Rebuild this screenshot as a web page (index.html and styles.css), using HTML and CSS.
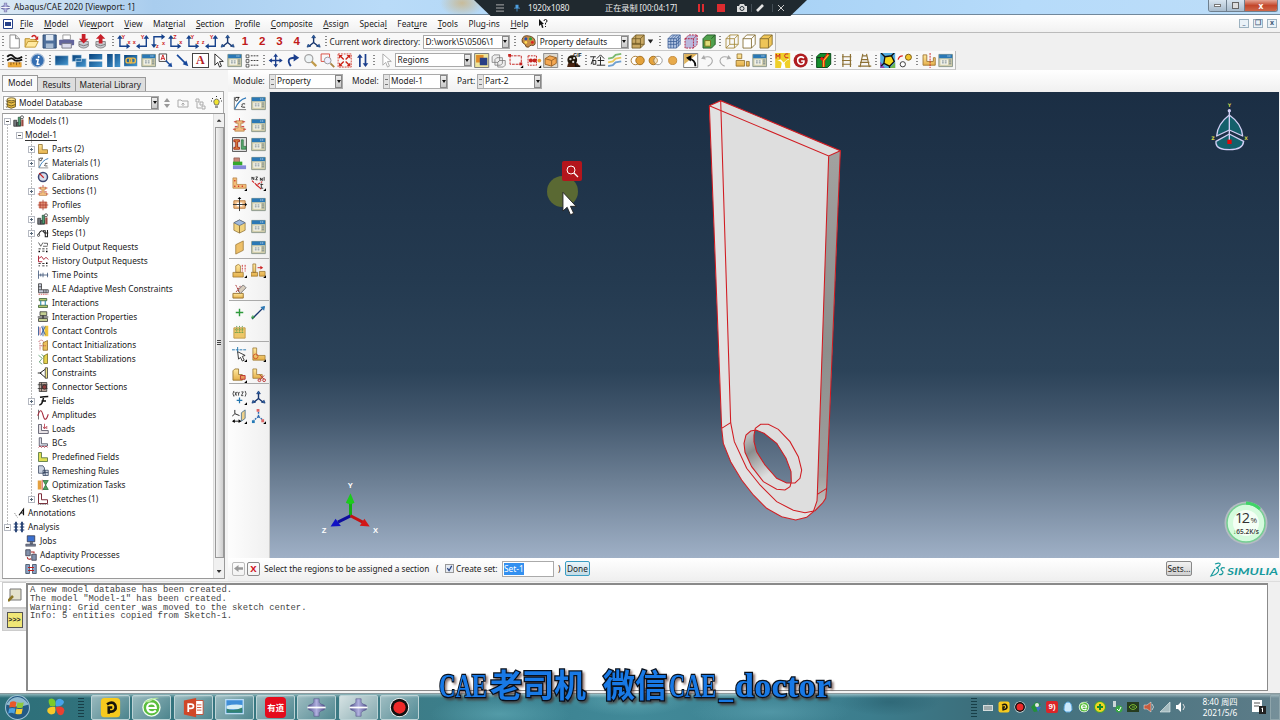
FILE: index.html
```html
<!DOCTYPE html>
<html lang="en">
<head>
<meta charset="UTF-8">
<title>Abaqus/CAE 2020 [Viewport: 1]</title>
<link rel="stylesheet" href="styles.css">
</head>
<body>

<!-- Icon set -->
<svg class="defs">
<defs>
<linearGradient id="gBlue" x1="0" y1="0" x2="1" y2="1"><stop offset="0" stop-color="#08427c"/><stop offset="1" stop-color="#4698d0"/></linearGradient>
<linearGradient id="gGold" x1="0" y1="0" x2="0" y2="1"><stop offset="0" stop-color="#ffe9a0"/><stop offset="1" stop-color="#e5b04a"/></linearGradient>
<linearGradient id="gHub" x1="0" x2="1"><stop offset="0" stop-color="#50508c"/><stop offset=".5" stop-color="#b0b0de"/><stop offset="1" stop-color="#50508c"/></linearGradient>
<symbol id="new" viewBox="0 0 16 16"><path d="M3 1h6l4 4v10H3z" fill="#fff" stroke="#888"/><path d="M9 1v4h4" fill="#ddd" stroke="#888"/></symbol>
<symbol id="open" viewBox="0 0 16 16"><path d="M1 14V5h5l1 1h6v3" fill="#f4d27a" stroke="#b98d28"/><path d="M1 14l3-6h11l-3 6z" fill="#ffe9a0" stroke="#c29a35"/><path d="M8 3q4-3 5 1" fill="none" stroke="#c22" stroke-width="1.6"/><path d="M15 2v4h-4z" fill="#c22"/></symbol>
<symbol id="save" viewBox="0 0 16 16"><path d="M1 1h14v14H1z" fill="#4e6f9b" stroke="#29486f"/><path d="M4 1h8v6H4z" fill="#dfe8f2"/><path d="M4 10h8v5H4z" fill="#a9bdd4"/></symbol>
<symbol id="print" viewBox="0 0 16 16"><path d="M4 1h8v5H4z" fill="#fff" stroke="#999"/><rect y="6" width="16" height="6" rx="1" fill="#62649c"/><path d="M3 10h10v5H3z" fill="#dde" stroke="#778"/></symbol>
<symbol id="dbin" viewBox="0 0 16 16"><path d="M3 8v5q5 4 10 0V8z" fill="#c9ccd2" stroke="#888"/><path d="M3 11q5 3 10 0" fill="none" stroke="#777"/><path d="M6 0h4v5h3L8 10 3 5h3z" fill="#c8202a"/></symbol>
<symbol id="dbout" viewBox="0 0 16 16"><path d="M3 8v5q5 4 10 0V8z" fill="#c9ccd2" stroke="#888"/><path d="M3 11q5 3 10 0" fill="none" stroke="#777"/><path d="M6 10h4V5h3L8 0 3 5h3z" fill="#c8202a"/></symbol>
<symbol id="axL" viewBox="0 0 16 16"><path d="M3 3v10h9" fill="none" stroke="#16428c" stroke-width="1.5"/><path d="M0 5l3-4 3 4zM10 10l4 3-4 3z" fill="#16428c"/></symbol>
<symbol id="axR" viewBox="0 0 16 16"><path d="M13 3v10H4" fill="none" stroke="#16428c" stroke-width="1.5"/><path d="M10 5l3-4 3 4zM6 10l-4 3 4 3z" fill="#16428c"/></symbol>
<symbol id="axT" viewBox="0 0 16 16"><path d="M3 13V3h10" fill="none" stroke="#16428c" stroke-width="1.5"/><path d="M0 11l3 4 3-4zM11 0l4 3-4 3z" fill="#16428c"/></symbol>
<symbol id="triad" viewBox="0 0 16 16"><path d="M8 9V2M8 9l-5 4M8 9l5 4" stroke="#17356e" stroke-width="1.5"/><path d="M6 4l2-3 2 3zM1 14l1-3 3 2zM15 14l-1-3-3 2z" fill="#2d68ae" stroke="#17356e" stroke-width=".7"/></symbol>
<symbol id="palette" viewBox="0 0 16 16"><path d="M1 6q1-5 7-4 7 1 7 7 0 4-4 3-2 0-3 2-3 1-4-3-4-2-3-5z" fill="#c68c47" stroke="#654422"/><circle cx="5" cy="5" r="1.6" fill="#2850b0"/><circle cx="10" cy="5" r="1.6" fill="#2ba03a"/><circle cx="12" cy="9" r="1.5" fill="#d22"/><circle cx="5" cy="9" r="1.5" fill="#fd5"/></symbol>
<symbol id="cube" viewBox="0 0 16 16"><path d="M2 5l4-4h9v10l-4 4H2z" fill="currentColor"/><path d="M2 5l4-4h9v10l-4 4H2zM2 5h9v10M11 5l4-4" fill="none" stroke="#80682c" stroke-width=".9"/></symbol>
<symbol id="cubeopen" viewBox="0 0 16 16"><path d="M2 5l4-4h9v10l-4 4H2z" fill="#c9a965"/><path d="M2 5l4-4h9v10l-4 4H2zM2 5h9v10M11 5l4-4M6 1v10H2M6 11h9M2 10h9" fill="none" stroke="#715a25" stroke-width=".9"/></symbol>
<symbol id="cubegrid" viewBox="0 0 16 16"><path d="M2 5l4-4h9v10l-4 4H2z" fill="#b5c7e4"/><path d="M2 5l4-4h9v10l-4 4H2zM2 5h9v10M11 5l4-4M5 5v10M8 5v10M2 8h9M2 11h9M11 8l4-4M11 11l4-4M5 5l4-4M8 5l4-4M13 3v10" fill="none" stroke="#365993" stroke-width=".8"/></symbol>
<symbol id="cubered" viewBox="0 0 16 16"><path d="M2 5l4-4h9v10l-4 4H2z" fill="#b9b8dc"/><path d="M2 5l4-4h9v10l-4 4H2zM2 5h9v10M11 5l4-4" fill="none" stroke="#b51e3d" stroke-dasharray="2 1"/></symbol>
<symbol id="cubegreen" viewBox="0 0 16 16"><path d="M2 5l4-4h9v10l-4 4H2z" fill="#4fa04c" stroke="#265a2a"/><path d="M4 7h6v6H4z" fill="#e1dc79" stroke="#75701c"/><path d="M11 5l4-4" stroke="#265a2a"/></symbol>
<symbol id="cubewire" viewBox="0 0 16 16"><path d="M2 5l4-4h9v10l-4 4H2zM2 5h9v10M11 5l4-4M6 1v10h9M6 11l-4 4" fill="none" stroke="#a48737" stroke-width=".9"/></symbol>
<symbol id="query" viewBox="0 0 16 16"><path d="M0 4q4-4 7 0t9 0M0 8q5-4 7-1t9 0" fill="none" stroke="#111" stroke-width="1.9"/><path d="M1 10h14v5H1z" fill="#f0ac35" stroke="#c48a39" stroke-width=".6"/><path d="M4 10v3M7 10v2M10 10v3M13 10v2" stroke="#70430b" stroke-width=".8"/></symbol>
<symbol id="info" viewBox="0 0 16 16"><circle cx="8" cy="8" r="7" fill="#356fb2" stroke="#a8bdd6" stroke-width="1.3"/><path d="M9 3.2v2M6 7h2.5L7.5 12H10" stroke="#fff" stroke-width="1.7" fill="none"/></symbol>
<symbol id="vp1" viewBox="0 0 16 16"><path d="M1 3h14v10H1z" fill="url(#gBlue)" stroke="#c5dced" stroke-width=".4"/></symbol>
<symbol id="vp2" viewBox="0 0 16 16"><path d="M1 2h10v7H1zM5 6h11v9H5z" fill="url(#gBlue)" stroke="#c5dced" stroke-width=".7"/></symbol>
<symbol id="vp3" viewBox="0 0 16 16"><path d="M1 1h14v6H1zM1 9h14v6H1z" fill="url(#gBlue)"/></symbol>
<symbol id="vp4" viewBox="0 0 16 16"><path d="M1 1h6v14H1zM9 1h6v14H9z" fill="url(#gBlue)"/></symbol>
<symbol id="link" viewBox="0 0 16 16"><path d="M1 2h14v12H1z" fill="url(#gBlue)"/><rect x="3" y="5.5" width="6" height="5" rx="2" fill="none" stroke="#f2bb42" stroke-width="1.5"/><rect x="7" y="5.5" width="6" height="5" rx="2" fill="none" stroke="#f2bb42" stroke-width="1.5"/></symbol>
<symbol id="mgr" viewBox="0 0 16 16"><path d="M.7 1.500h14.600v13H.7z" fill="#d3cfad" stroke="#8b978c"/><path d="M1 1.500h14v4H1z" fill="#2a78b5"/><path d="M10 3.200h1m1 0h1" stroke="#fff"/><path d="M2.500 7h8v5.500h-8z" fill="#f4f4ea"/><path d="M4 8.500h2m1 0h2M4 10.500h2m1 0h2M11.500 7.500h2.500m-2.500 2h2.500m-2.500 2h2.500" stroke="#667a86" stroke-width=".9"/></symbol>
<symbol id="annA" viewBox="0 0 16 16"><path d="M1 1h8v8H1z" fill="#fff" stroke="#444"/><path d="M3 7.5L5 2l2 5.5M4 6h2.5" stroke="#c22" fill="none"/><path d="M8 8l5 5" stroke="#17489a" stroke-width="1.6"/><path d="M15 15l-5-1 4-4z" fill="#17489a"/></symbol>
<symbol id="annArrow" viewBox="0 0 16 16"><path d="M2 2l9 9" stroke="#17489a" stroke-width="1.8"/><path d="M14 14l-6-2 4-4z" fill="#17489a"/></symbol>
<symbol id="ptr" viewBox="0 0 16 16"><path d="M5 1v12l3-3 2 5 2-1-2-5h4z" fill="#fff" stroke="currentColor"/></symbol>
<symbol id="list" viewBox="0 0 16 16"><path d="M1 2h3v3H1zM1 7h3v3H1zM1 12h3v3H1z" fill="#fff" stroke="#333" stroke-width=".8"/><path d="M6 3h9M6 8h9M6 13h9" stroke="#333" stroke-dasharray="2 1"/></symbol>
<symbol id="pan" viewBox="0 0 16 16"><path d="M8 2v12M2 8h12" stroke="#1b3f8d" stroke-width="1.4"/><path d="M5.500 4L8 .5 10.500 4zM5.500 12L8 15.500l2.500-3.500zM4 5.500L.5 8 4 10.500zM12 5.500L15.500 8 12 10.500z" fill="#1b3f8d"/></symbol>
<symbol id="rotate" viewBox="0 0 16 16"><path d="M6 14Q0 5 10 5" fill="none" stroke="#1b3f8d" stroke-width="2"/><path d="M9 1l6 4-6 4z" fill="#1b3f8d"/></symbol>
<symbol id="zoomi" viewBox="0 0 16 16"><circle cx="6" cy="6" r="4.3" fill="#edf3f5" stroke="#a5a5a5" stroke-width="1.3"/><path d="M9 9l5 5" stroke="#c19b4a" stroke-width="2.4"/></symbol>
<symbol id="zoombox" viewBox="0 0 16 16"><path d="M1 1h9v8H1z" fill="none" stroke="#d64b40"/><circle cx="8" cy="8" r="3.6" fill="#eef" stroke="#999"/><path d="M11 11l4 4" stroke="#a98545" stroke-width="2"/></symbol>
<symbol id="fit" viewBox="0 0 16 16"><path d="M1 1h14v14H1z" fill="none" stroke="#d34338" stroke-dasharray="2 1"/><path d="M3 3l4 4M13 3L9 7M3 13l4-4M13 13L9 9" stroke="#cc2318" stroke-width="1.4"/><path d="M2 2h4L2 6zM14 2v4l-4-4zM2 14v-4l4 4zM14 14h-4l4-4z" fill="#cc2318"/></symbol>
<symbol id="cycle" viewBox="0 0 16 16"><path d="M5 3v12M11 1v12" stroke="#1b3f8d" stroke-width="1.8"/><path d="M2 5l3-4 3 4zM8 11l3 4 3-4z" fill="#1b3f8d"/></symbol>
<symbol id="selE" viewBox="0 0 16 16"><path d="M.5.500h15v15H.5z" fill="#efe59b" stroke="#777"/><path d="M2 2h8v8H2z" fill="#e08d28"/><path d="M6 5h8v8H6z" fill="#283f85"/></symbol>
<symbol id="cubes" viewBox="0 0 16 16"><path d="M1 4l2-2h6v6l-2 2H1zM4 7l2-2h6v6l-2 2H4zM7 10l2-2h6v5l-2 2H7z" fill="#eee" stroke="#777" stroke-width=".8"/></symbol>
<symbol id="boxsel" viewBox="0 0 16 16"><path d="M2 3h12v9H2z" fill="none" stroke="#c52420" stroke-dasharray="3 1"/><path d="M0 1h3v3H0zM12 10h3v3h-3z" fill="#c52420"/><path d="M16 13v3h-3z"/></symbol>
<symbol id="boxsel2" viewBox="0 0 16 16"><path d="M2 3h9v10H2z" fill="none" stroke="#c52420" stroke-dasharray="2 1"/><circle cx="5" cy="8" r="2.2" fill="#c52420"/><circle cx="9" cy="8" r="2.2" fill="#c52420"/><circle cx="14" cy="8" r="2" fill="#e79d34"/><path d="M16 13v3h-3z"/></symbol>
<symbol id="boxorange" viewBox="0 0 16 16"><path d="M.5.5h15v15H.5z" fill="#dedad0" stroke="#888"/><path d="M2 6l5-3 7 2v6l-5 3-7-2z" fill="#f4a852" stroke="#9b6226"/><path d="M2 6l7 2 5-3M9 8v6" stroke="#9b6226" fill="none"/></symbol>
<symbol id="reel" viewBox="0 0 16 16"><circle cx="6.500" cy="7.500" r="5.200" fill="#221709"/><circle cx="4.500" cy="6.500" r="1.300" fill="#ddd"/><circle cx="8.500" cy="5.500" r="1.200" fill="#ddd"/><circle cx="7.500" cy="9.500" r="1.200" fill="#ddd"/><path d="M2 11h10l3 4H1z" fill="#4a2411"/><path d="M10 8v6h5" stroke="#111" stroke-width="1.500" fill="none"/></symbol>
<symbol id="pts" viewBox="0 0 16 16"><path d="M0 4h6M1 12l3-8M3 8h3v4H3zM7 6l4-4 4 4M8 8h7M11 4v9M7 13h9" fill="none" stroke="#222" stroke-width="1"/></symbol>
<symbol id="strips" viewBox="0 0 16 16"><path d="M1 6l5-1 3-3 6-1" stroke="#7cba72" stroke-width="2" fill="none"/><path d="M1 10l5-1 3-3 6-1" stroke="#e8c75a" stroke-width="2" fill="none"/><path d="M1 14l5-1 3-3 6-1" stroke="#6f9fd0" stroke-width="2" fill="none"/></symbol>
<symbol id="disc2" viewBox="0 0 16 16"><circle cx="5.5" cy="8" r="4.5" fill="#fff" stroke="#a77a33"/><circle cx="10.5" cy="8" r="4.5" fill="#e4a23b" stroke="#a26f21"/></symbol>
<symbol id="disc3" viewBox="0 0 16 16"><circle cx="5.5" cy="8" r="4.500" fill="#e4a23b" stroke="#a26f21"/><circle cx="10.5" cy="8" r="4.500" fill="#fff" stroke="#999"/><path d="M8 4.500q4 3.500 0 7-4-3.500 0-7" fill="#f6e3c0" stroke="#a26f21" stroke-width=".7"/></symbol>
<symbol id="disc1" viewBox="0 0 16 16"><circle cx="8" cy="8" r="4.300" fill="#e7aa4b" stroke="#c28a3d"/></symbol>
<symbol id="revert" viewBox="0 0 16 16"><path d="M.5.5h15v15H.5z" fill="#fff" stroke="#777"/><path d="M1 1h14L1 12z" fill="#ddb25d"/><path d="M13 14Q13 7 6 6" stroke="#111" stroke-width="2" fill="none"/><path d="M3 5l6-3-1 7z"/></symbol>
<symbol id="undo" viewBox="0 0 16 16"><path d="M3 5q9-3 10 3 0 4-5 6" fill="none" stroke="#aaa" stroke-width="1.2"/><path d="M1 6l3-4 2 5z" fill="#aaa"/></symbol>
<symbol id="redo" viewBox="0 0 16 16"><path d="M13 5Q4 2 3 8q0 4 5 6" fill="none" stroke="#aaa" stroke-width="1.2"/><path d="M15 6l-3-4-2 5z" fill="#aaa"/></symbol>
<symbol id="lpart" viewBox="0 0 16 16"><path d="M2 2h5v7h7v5H2z" fill="url(#gGold)" stroke="#8a6722"/></symbol>
<symbol id="lpart2" viewBox="0 0 16 16"><path d="M2 1h4v8h9v5H2z" fill="url(#gGold)" stroke="#9a7430" stroke-width=".8"/><circle cx="5" cy="10" r="2.500" fill="none" stroke="#d2572c"/><path d="M16 13v3h-3z"/></symbol>
<symbol id="lsplit" viewBox="0 0 16 16"><path d="M2 1h5v5H2zM1 8h9v6H1zM12 9h3v5h-3z" fill="url(#gGold)" stroke="#8a6722" stroke-width=".8"/></symbol>
<symbol id="mc" viewBox="0 0 16 16"><path d="M0 0h16v16H0z" fill="#efcf29"/><path d="M1 6V1l2 3 2-3v5M14 1q-4-1-4 2t4 2" fill="none" stroke="#c22"/><path d="M2 8q4 0 5 3l-1 5h5l-1-5q1-3 5-4l-1-1-5 4-3-3z" fill="#fff"/></symbol>
<symbol id="gred" viewBox="0 0 16 16"><circle cx="8" cy="8" r="7.500" fill="#af1d20"/><path d="M11.500 5.500Q8 2.500 5 6q-1 5 3 6 4 0 3.500-3.500H8.500" fill="none" stroke="#fff" stroke-width="1.700"/></symbol>
<symbol id="crack" viewBox="0 0 16 16"><path d="M.5 4L4 .5h11.500V12L12 15.500H.5z" fill="#148e2b" stroke="#041"/><path d="M1 5h7v10M8 5l6-4" stroke="#111" fill="none"/><path d="M8 15V8L5 5M8 8l5-7" stroke="#e52012" stroke-width="3" fill="none"/><path d="M8 15V8l5-6" stroke="#ffd02e" stroke-width="1.100" fill="none"/></symbol>
<symbol id="ladder" viewBox="0 0 16 16"><path d="M4 1v14M12 1v14M3 4h10M3 8h10M3 12h10" stroke="#8c7034" stroke-width="1.3"/></symbol>
<symbol id="ladder2" viewBox="0 0 16 16"><path d="M6 1L3 15M10 1l3 14M5 3h6M4 7h8M3 10h10M1 14h14" stroke="#8c7034" stroke-width="1.2"/></symbol>
<symbol id="voro" viewBox="0 0 16 16"><path d="M0 0h16v16H0z" fill="#55aee2"/><path d="M0 9l5 7H0z" fill="#8f4bb4"/><path d="M10 16l6-6v6z" fill="#70b94c"/><path d="M5 4l7-1 3 6-5 5-6-3z" fill="#f3d71f" stroke="#111" stroke-width="1.4"/><path d="M5 4L1 0M12 3l3-3M4 11l-3 3M10 14v2" stroke="#111" stroke-width="1.4"/></symbol>
<symbol id="nodes" viewBox="0 0 16 16"><circle cx="12" cy="4.500" r="3.200" fill="#f2c52d" stroke="#775711"/><circle cx="6" cy="12" r="2.800" fill="#fff" stroke="#333"/><path d="M1 7q1-4 5-4" stroke="#d22" stroke-width="1.400" fill="none"/></symbol>
<symbol id="lmirror" viewBox="0 0 16 16"><path d="M2 2h4v7h7V5h2v8H2z" fill="url(#gGold)" stroke="#a47b38"/><path d="M9.500 0v16" stroke="#c22" stroke-dasharray="2 1"/></symbol>
<symbol id="db" viewBox="0 0 16 16"><path d="M3 3v10q5 4 11 0V3z" fill="#e9bd43" stroke="#544418"/><ellipse cx="8.500" cy="3" rx="5.500" ry="2" fill="#ffe38a" stroke="#544418"/><path d="M3 6q5 4 11 0M3 10q5 4 11 0M1 5l2 1M1 9l2 1M1 13l2 1" fill="none" stroke="#544418"/></symbol>
<symbol id="sigma" viewBox="0 0 16 16"><path d="M2.500 1v13.500H15" fill="none" stroke="#777"/><path d="M3 14Q7 4 15 2" fill="none" stroke="#2c76b7" stroke-width="1.200"/><path d="M8 1.500H4q-2 2 0 3.500t3-3.500M14 8.500q-4-1-3 1.500-3 2 3 2" fill="none" stroke="#111" stroke-width=".9"/></symbol>
<symbol id="ibeam" viewBox="0 0 16 16"><path d="M4 3h8v2.500H9.500v5H13V14H3v-3.500h3.500v-5H4z" fill="#f3bd80" stroke="#b27d46" stroke-width=".8"/><path d="M8 0v3M2 4h3M11 4h3M3 9h3M10 9h3M1 12h3M12 12h3" stroke="#c33"/></symbol>
<symbol id="assign" viewBox="0 0 16 16"><path d="M.5.5h15v15H.5z" fill="#ddd" stroke="#555"/><path d="M2 3h6v2H6v6h2v2H2v-2h2V5H2z" fill="#e08a40" stroke="#a42b19"/><path d="M10 3h2v7h3v3h-5z" fill="#55a96e" stroke="#256b3a" stroke-width=".7"/></symbol>
<symbol id="layers" viewBox="0 0 16 16"><path d="M2 2h6v5H2z" fill="#c98778" stroke="#754438" stroke-width=".6"/><path d="M1 6h10v4H1z" fill="#36a72b"/><path d="M1 10h14v4H1z" fill="#8689d8"/></symbol>
<symbol id="lnodes" viewBox="0 0 16 16"><path d="M1 2h4v7h10v4H1z" fill="#f3bd78" stroke="#b58145" stroke-width=".8"/><circle cx="3" cy="5" r=".8" fill="#c22"/><circle cx="3" cy="11" r=".8" fill="#c22"/><circle cx="7" cy="11" r=".8" fill="#c22"/><circle cx="11" cy="11" r=".8" fill="#c22"/><path d="M16 13v3h-3z"/></symbol>
<symbol id="tangent" viewBox="0 0 16 16"><path d="M1 5l10 9M7 9l5-3M5 9l6 5" stroke="#c22" stroke-width="1.200" stroke-dasharray="3 1"/><path d="M1 4V1l2 3V1M5 1h2L5 4h2M10 5V2l2 3V2M14 1v4M11 8v5h2M10 9h3" fill="none" stroke="#222" stroke-width=".9"/><path d="M16 13v3h-3z"/></symbol>
<symbol id="profile" viewBox="0 0 16 16"><path d="M2 4h12v8H2z" fill="#f3c08a" stroke="#b57a3f"/><path d="M5 6h6v4H5z" fill="#fff"/><path d="M8 1v14M1 8h14" stroke="#333"/><path d="M6 2l2-2 2 2zM14 6l2 2-2 2z"/></symbol>
<symbol id="redprofile" viewBox="0 0 16 16"><path d="M3 4h10v8H3z" fill="#f0a184" stroke="#b5482f"/><path d="M8 1v14M1 8h14M5 4v8M11 4v8" stroke="#a5372b"/></symbol>
<symbol id="skin" viewBox="0 0 16 16"><path d="M2 4l6-3 6 3v8l-6 3-6-3z" fill="#f1d27d" stroke="#917335" stroke-width=".8"/><path d="M2 4l6-3 6 3-6 3z" fill="#9fb9dd" stroke="#546c91" stroke-width=".8"/><path d="M8 7v8" stroke="#917335"/></symbol>
<symbol id="sheet" viewBox="0 0 16 16"><path d="M4 5l8-4v10l-8 4z" fill="#eec069" stroke="#9a7430" stroke-width=".8"/></symbol>
<symbol id="feat" viewBox="0 0 16 16"><path d="M4 3q3-3 5 0v7H4zM1 10h11v5H1z" fill="url(#gGold)" stroke="#9a7430" stroke-width=".8"/><path d="M11 2v7M14 2v7" stroke="#c33" stroke-dasharray="2 1"/><path d="M16 13v3h-3z"/></symbol>
<symbol id="featmove" viewBox="0 0 16 16"><path d="M2 1h3v9H2zM0 10h7v4H0zM9 9h6v5H9z" fill="url(#gGold)" stroke="#9a7430" stroke-width=".8"/><path d="M7 5h4" stroke="#c22"/><path d="M10 3l3 2-3 2z" fill="#c22"/><path d="M16 13v3h-3z"/></symbol>
<symbol id="erase" viewBox="0 0 16 16"><path d="M1 10h11v5H1z" fill="url(#gGold)" stroke="#9a7430"/><path d="M6 7l6-6 3 3-6 6z" fill="#d9cdbd" stroke="#777"/><path d="M4 1l4 8M9 2L4 9" stroke="#a33" stroke-dasharray="2 1"/></symbol>
<symbol id="plus" viewBox="0 0 16 16"><path d="M8 4v8M4 8h8" stroke="#2f9a3c" stroke-width="1.500"/></symbol>
<symbol id="datum" viewBox="0 0 16 16"><path d="M1 15L14 2" stroke="#17356e" stroke-width="1.400"/><path d="M15 1l-1 5-4-4z" fill="#2a78b5"/><path d="M2 11v4M0 13h4" stroke="#2f9a3c"/></symbol>
<symbol id="mesh" viewBox="0 0 16 16"><path d="M2 3h12v11H2z" fill="#edc668" stroke="#c39c4c"/><path d="M5 1v8M8 1v8M11 1v8M3 5h10M3 8h10" stroke="#509848" stroke-dasharray="1 1"/></symbol>
<symbol id="partedge" viewBox="0 0 16 16"><path d="M0 3h16" stroke="#2375ae" stroke-dasharray="3 1"/><path d="M6 0v6" stroke="#2375ae"/><path d="M6 5l1 8 2-2 2 4 2-1-2-4 3-1z" fill="#fff" stroke="#333"/><path d="M16 13v3h-3z"/></symbol>
<symbol id="cut" viewBox="0 0 16 16"><path d="M2 1h4v6h6v4H2z" fill="url(#gGold)" stroke="#9a7430" stroke-width=".8"/><path d="M9 7l5 5M14 8l-5 5" stroke="#b33"/><circle cx="14" cy="13" r="1.500" fill="none" stroke="#b33"/><circle cx="9" cy="13" r="1.500" fill="none" stroke="#b33"/></symbol>
<symbol id="lred" viewBox="0 0 16 16"><path d="M1 3l2-2h4v6h4v6H1z" fill="url(#gGold)" stroke="#8a6722" stroke-width=".8"/><path d="M9 8h5v4H9z" fill="#e89a58" stroke="#b33"/><path d="M16 13v3h-3z"/></symbol>
<symbol id="xyz" viewBox="0 0 16 16"><path d="M2 1Q0 4 2 7M14 1q2 3 0 6M3 2l2 4M5 2L3 6M6 2l1 2 1-2M7 4v2M10 2h2l-2 4h2" fill="none" stroke="#333" stroke-width=".9"/><path d="M8 8v6M5 11h6" stroke="#2375ae" stroke-width="1.300"/><path d="M16 13v3h-3z"/></symbol>
<symbol id="plane" viewBox="0 0 16 16"><path d="M1 13h8M3 1v4L0 8M3 5l5 2" stroke="#222" fill="none"/><path d="M3 11l-3 2 3 2zM7 11l3 2-3 2z"/><path d="M10 4l4-3v9l-4 3z" fill="#eed089" stroke="#5a7b93"/><path d="M16 13v3h-3z"/></symbol>
<symbol id="triad2" viewBox="0 0 16 16"><path d="M8 8V3M8 8l-5 4M8 8l5 4" stroke="#2a68ae" stroke-width="1.500" stroke-dasharray="2 1"/><path d="M6 0h3v3H6zM11 11h3v3h-3z" fill="#d66"/><path d="M1 12h3v3H1z" fill="#247ab6"/><path d="M16 13v3h-3z"/></symbol>
<symbol id="models" viewBox="0 0 16 16"><path d="M1 7h4v8H1zM5 10h5v5H5z" fill="#74777d" stroke="#333"/><path d="M7 3h3v11H7z" fill="#4f9c70" stroke="#24513b"/><circle cx="12" cy="3" r="2" fill="#fff" stroke="#333"/><path d="M11 6h3v9h-3z" fill="#984b43"/></symbol>
<symbol id="dial" viewBox="0 0 16 16"><circle cx="8" cy="8" r="6" fill="#d7deed" stroke="#3c4772" stroke-width="2"/><path d="M3 3l6 6" stroke="#c22" stroke-width="1.500"/></symbol>
<symbol id="steps" viewBox="0 0 16 16"><path d="M2 10q4-9 8-2h5M8 5h3v8h3V4" fill="none" stroke="#222" stroke-width="1.400"/><circle cx="2" cy="11" r="1.500" fill="#fff" stroke="#222"/></symbol>
<symbol id="fout" viewBox="0 0 16 16"><path d="M2 2l3 5 3-5M8 7h6M9 3h5v3" stroke="#333" fill="none"/><path d="M2 10h3v1H2zM7 10h3v1H7zM12 10h2v1h-2zM2 13h2v2H2zM7 13h3v1H7zM12 13h2v2h-2z"/></symbol>
<symbol id="hout" viewBox="0 0 16 16"><path d="M2 1v8h5M2 5l4-3 3 4 3-3 3 3" stroke="#b0283b" fill="none" stroke-width="1.300"/><path d="M2 11h3v1H2zM7 11h3v1H7zM12 10h2v2h-2zM2 14h2v1H2zM7 14h3v1H7zM12 14h2v1h-2z"/></symbol>
<symbol id="tp" viewBox="0 0 16 16"><path d="M2 2v11M2 8h13M8 5v6M14 5v6M5 6v4" stroke="#31496f" fill="none"/></symbol>
<symbol id="ale" viewBox="0 0 16 16"><path d="M2 1v12h13V9H6V1zM2 5h4M2 9h4M9 9v4M12 9v4" fill="#c7ccd9" stroke="#333"/><path d="M2 15h13" stroke="#c33" stroke-dasharray="2 1"/></symbol>
<symbol id="inter" viewBox="0 0 16 16"><path d="M3 2h10v3H3zM2 11h12v3H2z" fill="#b2c76e" stroke="#31582e"/><path d="M5 5v6M11 5v6" stroke="#288aa6" stroke-width="1.400"/></symbol>
<symbol id="iprop" viewBox="0 0 16 16"><path d="M4 1h9v5H4zM2 10h12v4H2z" fill="#c4cf93" stroke="#333"/><path d="M1 8h14M8 6v4" stroke="#222" stroke-width="1.500"/></symbol>
<symbol id="cctl" viewBox="0 0 16 16"><path d="M10 1h5v14h-5z" fill="#edc33a"/><path d="M2 2v12M6 2l5 11M11 2L5 14M8 1v14" stroke="#315b99" stroke-width="1.200"/><path d="M4 3v10" stroke="#b33a59"/></symbol>
<symbol id="cinit" viewBox="0 0 16 16"><path d="M8 5l6-3v13H8z" fill="#ebc05b" stroke="#8e6726"/><path d="M4 5v10M2 4q4-5 7 0M5 9h7" stroke="#b33d45" fill="none" stroke-dasharray="2 1"/></symbol>
<symbol id="cstab" viewBox="0 0 16 16"><path d="M9 4l5-3v13H9z" fill="#e5d34b" stroke="#72661a"/><path d="M2 3l5 4-4 5 4 3M6 2l4 3" stroke="#44915a" fill="none"/></symbol>
<symbol id="cons" viewBox="0 0 16 16"><path d="M11 1h3v14h-3z" fill="#f0e583" stroke="#333"/><path d="M11 3L4 8l7 6M1 8h5" stroke="#222" fill="none" stroke-width="1.300"/></symbol>
<symbol id="conn" viewBox="0 0 16 16"><path d="M3 2h10v12H3z" fill="#b7a297" stroke="#333"/><path d="M1 5h13M1 10h13M6 2v12" stroke="#333"/><circle cx="10" cy="8" r="3" fill="#8e3d3d" stroke="#222"/></symbol>
<symbol id="fld" viewBox="0 0 16 16"><path d="M4 3q6-1 11-1M9 2Q7 14 3 13M6 8h6" stroke="#111" stroke-width="2" fill="none"/></symbol>
<symbol id="amp" viewBox="0 0 16 16"><path d="M2 1v13" stroke="#444"/><path d="M1 9Q5-4 8 8t7-1" stroke="#a5283b" fill="none" stroke-width="1.400"/></symbol>
<symbol id="load" viewBox="0 0 16 16"><path d="M2 2h4v8h9v4H2z" fill="#e7e2e5" stroke="#445"/><path d="M10 1v6M13 4v4M8 5l2 3 2-3" stroke="#b12839" fill="none"/></symbol>
<symbol id="bc" viewBox="0 0 16 16"><path d="M3 1h3v8h8v3H3z" fill="#dce0e9" stroke="#445"/><path d="M2 14l2-2 2 2 2-2 2 2 2-2 2 2" stroke="#b12839" fill="none"/></symbol>
<symbol id="pf" viewBox="0 0 16 16"><path d="M2 2h4v7h8v5H2z" fill="#dfdf55" stroke="#446736"/></symbol>
<symbol id="rem" viewBox="0 0 16 16"><path d="M2 1h6l2 3v7H2zM8 7h7v7H8zM11 7v7M8 10h7" fill="#c9d1df" stroke="#34435e"/></symbol>
<symbol id="opt" viewBox="0 0 16 16"><path d="M1 2h5v12H1z" fill="#e4a03f"/><path d="M8 2l7 12H8l7-12z" fill="#51a25b" stroke="#286d39"/><path d="M7 1v14" stroke="#c33"/></symbol>
<symbol id="sk" viewBox="0 0 16 16"><path d="M2 1h4v8h8v5H2z" fill="none" stroke="#7a2835" stroke-width="1.300"/><path d="M1 15h14" stroke="#555" stroke-dasharray="2 1"/></symbol>
<symbol id="ann" viewBox="0 0 16 16"><path d="M2 8l4 6" stroke="#777" stroke-dasharray="2 1"/><path d="M8 11l6-8v8M10 8h4" fill="none" stroke="#111" stroke-width="1.600"/></symbol>
<symbol id="ana" viewBox="0 0 16 16"><path d="M4 1v14M12 1v14" stroke="#213d70" stroke-width="2.400"/><path d="M1 4h6M1 8h6M1 12h6M9 4h6M9 8h6M9 12h6" stroke="#213d70" stroke-width="1.600"/></symbol>
<symbol id="job" viewBox="0 0 16 16"><path d="M3 1h10v8H3z" fill="#3b70cf" stroke="#334"/><path d="M1 12h13v3H1zM7 9h3v3H7z" fill="#778093" stroke="#334" stroke-width=".6"/></symbol>
<symbol id="adapt" viewBox="0 0 16 16"><path d="M1 1h6v8H1zM9 7h6v8H9z" fill="#8291ab" stroke="#334"/><path d="M3 11q1 4 5 2M8 4h4v2" stroke="#a22" fill="none" stroke-width="1.400"/></symbol>
<symbol id="coex" viewBox="0 0 16 16"><path d="M1 2h5v12H1zM10 2h5v12h-5z" fill="#8ba2c5" stroke="#345"/><path d="M4 6h8M4 10h8" stroke="#b22" stroke-width="1.500"/></symbol>
<symbol id="hub" viewBox="0 0 24 24"><path d="M9 2h6v4l2 2q5 1 5 4t-5 4l-2 2v4H9v-4l-2-2q-5-1-5-4t5-4l2-2z" fill="url(#gHub)" stroke="#515185" stroke-width=".6"/><path d="M1.500 12h21" stroke="#fff" stroke-width="2"/></symbol>
<symbol id="egreen" viewBox="0 0 24 24"><circle cx="12" cy="12" r="10.500" fill="#f2fff0"/><circle cx="12" cy="12" r="9" fill="#59bd3d"/><path d="M7 12.500h10q0-5-5-5t-5 5q1 5 6 5 2 0 4-2" fill="none" stroke="#fff" stroke-width="2.400"/><path d="M3 6q9-6 18-5-7 1-12 5" fill="#b4e89b"/></symbol>
<symbol id="pdisc" viewBox="0 0 24 24"><rect x="1" y="1" width="22" height="22" rx="4" fill="#f6c91e"/><path d="M8 8.500q6-4 9 0 2.500 5-1.500 7.500-3 1.500-6.500 0M10 19v-7h4" fill="none" stroke="#16130b" stroke-width="3"/></symbol>
<symbol id="recd" viewBox="0 0 24 24"><circle cx="12" cy="12" r="11" fill="#fff"/><circle cx="12" cy="12" r="10" fill="#111"/><circle cx="12" cy="12" r="7" fill="#ee2929"/></symbol>
</defs>
</svg>

<div class="titlebar">
    <svg class="appicon"><use href="#hub"/></svg>
    <span class="title">Abaqus/CAE 2020 [Viewport: 1]</span>
    <div class="winbtns"><span class="min"><i></i></span><span class="max"><i></i></span><span class="close">x</span></div>
</div>

<div class="menubar">
    <svg class="docicon" viewBox="0 0 10 10"><path d="M.5.500h9v9h-9z" fill="#fff" stroke="#26418a"/><path d="M2 3h6v4H2z" fill="#26418a"/></svg>
    <span><u>F</u>ile</span><span><u>M</u>odel</span><span>Vie<u>w</u>port</span><span><u>V</u>iew</span><span>Mat<u>e</u>rial</span><span><u>S</u>ection</span><span><u>P</u>rofile</span><span><u>C</u>omposite</span><span><u>A</u>ssign</span><span>Specia<u>l</u></span><span>Feat<u>u</u>re</span><span><u>T</u>ools</span><span>Plu<u>g</u>-ins</span><span><u>H</u>elp</span>
    <svg class="helpptr" viewBox="0 0 10 10"><path d="M1 0v7l2-1.500L4 9l1.500-.6L4.300 5H6z" fill="#111"/><path d="M6 2q0-1.500 1.500-1.500T9 2Q9 3 7.500 4v1.500M7.500 7v1" stroke="#111" fill="none"/></svg>
    <div class="mdi"><i>_</i><i>&#10064;</i><i>x</i></div>
</div>

<div class="tools">
    <div class="toolbar t1">
        <b class="grip"></b>
        <svg><use href="#new"/></svg><svg><use href="#open"/></svg><svg><use href="#save"/></svg><svg><use href="#print"/></svg><svg><use href="#dbin"/></svg><svg><use href="#dbout"/></svg>
        <b class="grip"></b>
        <span class="ax"><svg><use href="#axL"/></svg><em class="tl">Y</em><em class="br">x</em></span>
        <span class="ax"><svg><use href="#axR"/></svg><em class="tc">Y</em><em class="bl">x</em></span>
        <span class="ax"><svg><use href="#axT"/></svg><em class="mr">x</em><em class="bm">z</em></span>
        <span class="ax"><svg><use href="#axL"/></svg><em class="tl">Z</em><em class="br">x</em></span>
        <span class="ax"><svg><use href="#axL"/></svg><em class="tl">Y</em><em class="br">z</em></span>
        <span class="ax"><svg><use href="#axR"/></svg><em class="tc">Y</em><em class="bl">z</em></span>
        <svg><use href="#triad"/></svg>
        <strong>1</strong><strong>2</strong><strong>3</strong><strong>4</strong>
        <svg><use href="#triad"/></svg>
        <b class="grip"></b>
        <label class="cwd">Current work directory:</label>
        <div class="combo w87">D:\work\5\0506\1<i></i></div>
        <b class="grip wide"></b>
        <svg><use href="#palette"/></svg>
        <div class="combo w92">Property defaults<i></i></div>
        <svg><use href="#cubeopen"/></svg>
        <b class="drop"></b>
        <b class="grip wide"></b>
        <svg><use href="#cubegrid"/></svg><svg><use href="#cubered"/></svg><svg><use href="#cubegreen"/></svg>
        <b class="grip"></b>
        <svg><use href="#cubewire"/></svg><svg class="hollow"><use href="#cube"/></svg><svg class="gold"><use href="#cube"/></svg>
    </div>
    <div class="toolbar t2">
        <b class="grip"></b><svg><use href="#query"/></svg><b class="grip"></b><svg><use href="#info"/></svg><b class="grip"></b>
        <svg><use href="#vp1"/></svg><svg><use href="#vp2"/></svg><svg><use href="#vp3"/></svg><svg><use href="#vp4"/></svg><svg><use href="#link"/></svg><svg><use href="#mgr"/></svg>
        <svg><use href="#annA"/></svg><svg><use href="#annArrow"/></svg><span class="abox">A</span><svg><use href="#ptr"/></svg><svg><use href="#mgr"/></svg><svg><use href="#list"/></svg>
        <b class="grip"></b>
        <svg><use href="#pan"/></svg><svg><use href="#rotate"/></svg><svg><use href="#zoomi"/></svg><svg><use href="#zoombox"/></svg><svg><use href="#fit"/></svg><svg><use href="#cycle"/></svg>
        <b class="grip"></b>
        <svg class="dim"><use href="#ptr"/></svg>
        <div class="combo w77">Regions<i></i></div>
        <svg><use href="#selE"/></svg><svg><use href="#cubes"/></svg><svg><use href="#boxsel"/></svg><svg><use href="#boxsel2"/></svg><svg><use href="#boxorange"/></svg>
        <b class="grip"></b>
        <span class="ax"><svg><use href="#reel"/></svg><em class="gif">GIF</em></span>
        <b class="grip"></b><svg><use href="#pts"/></svg><svg><use href="#strips"/></svg><b class="grip"></b>
        <svg><use href="#disc2"/></svg><svg><use href="#disc3"/></svg><svg><use href="#disc1"/></svg><svg><use href="#revert"/></svg><svg><use href="#undo"/></svg><svg><use href="#redo"/></svg><svg><use href="#lsplit"/></svg><svg><use href="#mgr"/></svg>
        <b class="grip"></b><svg><use href="#mc"/></svg><svg><use href="#gred"/></svg><b class="grip"></b><svg><use href="#crack"/></svg><b class="grip"></b>
        <svg><use href="#ladder"/></svg><svg><use href="#ladder2"/></svg><b class="grip"></b><svg><use href="#voro"/></svg><svg><use href="#nodes"/></svg><b class="grip"></b>
        <svg><use href="#lmirror"/></svg><svg><use href="#mgr"/></svg>
    </div>
</div>

<div class="main">
    <div class="left">
        <div class="tabs"><span class="on">Model</span><span>Results</span><span>Material Library</span></div>
        <div class="dbrow">
            <div class="combo db"><svg><use href="#db"/></svg>Model Database<i></i></div>
            <svg class="dbtools" viewBox="0 0 60 14"><path d="M1 6l3-4 3 4zM1 8l3 4 3-4z" fill="#999"/><path d="M15 4h3l1 1h6v6H15zM20 10V7M18.500 8.500L20 7l1.500 1.500" fill="none" stroke="#aaa"/><path d="M33 3h3v3h-3zM37 6h3v3h-3zM39 10h3v3h-3zM34 7v5h4" fill="none" stroke="#aaa"/><path d="M52 9q-3-5 1.500-6 4.500 1 1.500 6z" fill="#f0e32f" stroke="#776"/><path d="M52 11h3M53.500 0v1M48 5h1M58 5h1M49 2l1 1M58 2l-1 1" stroke="#333"/></svg>
        </div>
        <div class="treebox">
            <div class="tree">
                <div class="row l0 open"><svg><use href="#models"/></svg>Models (1)</div>
                <div class="row l1 open"><span class="cur">Model-1</span></div>
                <div class="row l2 shut"><svg><use href="#lpart"/></svg>Parts (2)</div>
                <div class="row l2 shut"><svg><use href="#sigma"/></svg>Materials (1)</div>
                <div class="row l2"><svg><use href="#dial"/></svg>Calibrations</div>
                <div class="row l2 shut"><svg><use href="#ibeam"/></svg>Sections (1)</div>
                <div class="row l2"><svg><use href="#redprofile"/></svg>Profiles</div>
                <div class="row l2 shut"><svg><use href="#models"/></svg>Assembly</div>
                <div class="row l2 shut"><svg><use href="#steps"/></svg>Steps (1)</div>
                <div class="row l2"><svg><use href="#fout"/></svg>Field Output Requests</div>
                <div class="row l2"><svg><use href="#hout"/></svg>History Output Requests</div>
                <div class="row l2"><svg><use href="#tp"/></svg>Time Points</div>
                <div class="row l2"><svg><use href="#ale"/></svg>ALE Adaptive Mesh Constraints</div>
                <div class="row l2"><svg><use href="#inter"/></svg>Interactions</div>
                <div class="row l2"><svg><use href="#iprop"/></svg>Interaction Properties</div>
                <div class="row l2"><svg><use href="#cctl"/></svg>Contact Controls</div>
                <div class="row l2"><svg><use href="#cinit"/></svg>Contact Initializations</div>
                <div class="row l2"><svg><use href="#cstab"/></svg>Contact Stabilizations</div>
                <div class="row l2"><svg><use href="#cons"/></svg>Constraints</div>
                <div class="row l2"><svg><use href="#conn"/></svg>Connector Sections</div>
                <div class="row l2 shut"><svg><use href="#fld"/></svg>Fields</div>
                <div class="row l2"><svg><use href="#amp"/></svg>Amplitudes</div>
                <div class="row l2"><svg><use href="#load"/></svg>Loads</div>
                <div class="row l2"><svg><use href="#bc"/></svg>BCs</div>
                <div class="row l2"><svg><use href="#pf"/></svg>Predefined Fields</div>
                <div class="row l2"><svg><use href="#rem"/></svg>Remeshing Rules</div>
                <div class="row l2"><svg><use href="#opt"/></svg>Optimization Tasks</div>
                <div class="row l2 shut"><svg><use href="#sk"/></svg>Sketches (1)</div>
                <div class="row l0"><svg><use href="#ann"/></svg>Annotations</div>
                <div class="row l0 open"><svg><use href="#ana"/></svg>Analysis</div>
                <div class="row l1"><svg><use href="#job"/></svg>Jobs</div>
                <div class="row l1"><svg><use href="#adapt"/></svg>Adaptivity Processes</div>
                <div class="row l1"><svg><use href="#coex"/></svg>Co-executions</div>
                <div class="row l1"><svg><use href="#opt"/></svg></div>
            </div>
            <div class="scroll"><i class="up"></i><div class="thumb"><b></b></div><i class="down"></i></div>
        </div>
    </div>

    <div class="right">
        <div class="context">
            <label>Module:</label><div class="combo spin w71">Property<i></i></div>
            <label class="m2">Model:</label><div class="combo spin w64">Model-1<i></i></div>
            <label class="m3">Part:</label><div class="combo spin w64">Part-2<i></i></div>
        </div>
        <div class="work">
            <div class="toolbox">
                <div class="grp g1">
                    <svg><use href="#sigma"/></svg><svg><use href="#mgr"/></svg>
                    <svg><use href="#ibeam"/></svg><svg><use href="#mgr"/></svg>
                    <svg><use href="#assign"/></svg><svg><use href="#mgr"/></svg>
                    <svg><use href="#layers"/></svg><svg><use href="#mgr"/></svg>
                    <svg><use href="#lnodes"/></svg><svg><use href="#tangent"/></svg>
                    <svg><use href="#profile"/></svg><svg><use href="#mgr"/></svg>
                    <svg><use href="#skin"/></svg><svg><use href="#mgr"/></svg>
                    <svg><use href="#sheet"/></svg><svg><use href="#mgr"/></svg>
                </div>
                <div class="grp g2"><svg><use href="#feat"/></svg><svg><use href="#featmove"/></svg><svg><use href="#erase"/></svg></div>
                <div class="grp g3"><svg><use href="#plus"/></svg><svg><use href="#datum"/></svg><svg><use href="#mesh"/></svg></div>
                <div class="grp g4"><svg><use href="#partedge"/></svg><svg><use href="#lpart2"/></svg><svg><use href="#lred"/></svg><svg><use href="#cut"/></svg></div>
                <div class="grp g5"><svg><use href="#xyz"/></svg><svg><use href="#triad"/></svg><svg><use href="#plane"/></svg><svg><use href="#triad2"/></svg></div>
            </div>
            <div class="viewport">
                <svg class="part" viewBox="0 0 600 1320">
                    <defs>
                        <linearGradient id="side" x1="0" y1="0" x2="0" y2="1"><stop offset="0" stop-color="#a2a2a0"/><stop offset=".55" stop-color="#8d8e8c"/><stop offset=".9" stop-color="#a0a09e"/><stop offset="1" stop-color="#c8c8c6"/></linearGradient>
                        <linearGradient id="bore" x1="0" y1="0" x2=".5" y2="1"><stop offset="0" stop-color="#d5d5d5"/><stop offset=".35" stop-color="#8b8d8d"/><stop offset=".8" stop-color="#dedede"/></linearGradient>
                        <linearGradient id="sky" x1="0" y1="0" x2="0" y2="1"><stop offset="0" stop-color="#495d73"/><stop offset="1" stop-color="#6d8095"/></linearGradient>
                        <clipPath id="front"><path d="M192 1045L198 1020 212 1008 228 1005 252 1015 290 1045 318 1090 333 1130 334 1160 330 1175 315 1185 290 1183 250 1160 215 1115 195 1072z"/></clipPath>
                    </defs>
                    <path d="M88 32L122 17 481 167 440 1180 437 1210 428 1224 400 1250 380 1267 347 1275 305 1265 260 1240 220 1200 185 1155 152 1100 130 1045 125 1000z" fill="#dedede"/>
                    <path d="M88 32L122 17 152 983 163 1040 200 1120 240 1170 290 1220 340 1246 375 1253 400 1250 380 1267 347 1275 305 1265 260 1240 220 1200 185 1155 152 1100 130 1045 125 1000z" fill="#e2e2e2"/>
                    <path d="M446 183L481 167 440 1180 437 1210 428 1224 400 1250 411 1218 412 1198z" fill="url(#side)"/>
                    <path d="M192 1045L198 1020 212 1008 228 1005 252 1015 290 1045 318 1090 333 1130 334 1160 330 1175 315 1185 290 1183 250 1160 215 1115 195 1072z" fill="url(#bore)"/>
                    <path clip-path="url(#front)" d="M222 1020L226 1000 242 988 265 988 295 1003 330 1040 355 1085 365 1125 360 1150 345 1164 320 1164 290 1150 255 1110 230 1070 222 1040z" fill="url(#sky)"/>
                    <g fill="none" stroke="#d01c22" stroke-width="3.2">
                        <path d="M88 32L122 17 481 167 440 1180 437 1210 428 1224 405 1247 375 1253 340 1246 290 1220 240 1170 200 1120 163 1040 152 983 122 17"/>
                        <path d="M88 32L446 183 481 167M446 183L412 1198 411 1218 400 1250 380 1267 347 1275 305 1265 260 1240 220 1200 185 1155 152 1100 130 1045 125 1000 88 32M125 1000L152 983M412 1198L440 1180"/>
                        <path d="M192 1045L198 1020 212 1008 228 1005 252 1015 290 1045 318 1090 333 1130 334 1160 330 1175 315 1185 290 1183 250 1160 215 1115 195 1072z"/>
                        <path d="M222 1020L226 1000 242 988 265 988 295 1003 330 1040 355 1085 365 1125 360 1150 345 1164 320 1164 290 1150 255 1110 230 1070 222 1040z"/>
                    </g>
                </svg>

                <svg class="compass" viewBox="747 300 120 156">
                    <g fill="#14606b" stroke="#d3cff5" stroke-width="4" stroke-linejoin="round"><path d="M808 345Q772 372 770 408L808 390 848 408Q846 372 808 345z"/><path d="M768 424L808 402 851 424Q848 449 809 449T768 430z"/><path d="M808 330V420"/></g>
                    <circle cx="808" cy="332" r="5" fill="#d3cff5"/><path d="M802 419h13v13h-13z" fill="#e20909"/>
                    <g fill="#d9d94c" font-family="DejaVu Sans" font-weight="bold" font-size="14"><text x="803" y="322">Y</text><text x="754" y="419">Z</text><text x="853" y="419">X</text></g>
                </svg>

                <svg class="axes" viewBox="280 30 190 170">
                    <path d="M378 137V95" stroke="#12b012" stroke-width="9"/><path d="M364 98L378 69 390 98Q378 106 364 98z" fill="#1ccb1c"/>
                    <path d="M378 137L340 156" stroke="#0d0d9c" stroke-width="9"/><path d="M318 169L333 146 349 168z" fill="#1111c4"/>
                    <path d="M378 137L415 156" stroke="#c41212" stroke-width="9"/><path d="M436 169L420 146 406 167z" fill="#d31616"/>
                    <g fill="#fff" font-family="Liberation Sans" font-size="23" font-weight="bold"><text x="370" y="53">Y</text><text x="291" y="188">Z</text><text x="446" y="188">X</text></g>
                </svg>

                <svg class="ring" viewBox="0 0 44 44">
                    <circle cx="22" cy="22" r="21.500" fill="#b4bcc3"/><circle cx="22" cy="22" r="19" fill="#d5fbdd" stroke="#75cf92" stroke-width="1.500"/><circle cx="22" cy="22" r="13" fill="#f4fff5"/>
                    <path d="M22 2a20 20 0 0 1 14 6" fill="none" stroke="#3fd467" stroke-width="3"/>
                    <g fill="#333" font-family="Open Sans"><text x="11" y="22" font-size="14.500" textLength="15">12</text><text x="26.500" y="22" font-size="8">%</text><text x="9" y="33" font-size="6.300" textLength="26" lengthAdjust="spacingAndGlyphs" font-weight="600"><tspan fill="#169a3b">&#8595;</tspan>65.2K/s</text></g>
                </svg>

                <div class="spot"></div>
                <svg class="mag" viewBox="0 0 20 20"><rect width="20" height="20" rx="2" fill="#b3151c"/><circle cx="9" cy="9" r="4" fill="none" stroke="#fff"/><path d="M12 12l4 4" stroke="#fff" stroke-width="1.300"/></svg>
                <svg class="mouse" viewBox="0 0 16 26"><path d="M1 1v20l4.500-4 3.500 8 3.500-1.500L9 16h6z" fill="#fff" stroke="#222"/></svg>
            </div>
        </div>
        <div class="prompt">
            <span class="back"><svg viewBox="0 0 10 10"><path d="M0 5l5-4v2.500h5v3H5V9z" fill="#999"/></svg></span><span class="cancel">X</span>
            <span class="ptext">Select the regions to be assigned a section</span><span class="paren">(</span><span class="check"><svg viewBox="0 0 8 8"><path d="M1.500 3.500L3.500 6.500 6.500 1" fill="none" stroke="#26407e" stroke-width="1.400"/></svg></span>
            <span class="cs">Create set:</span><div class="field"><mark>Set-1</mark></div><span class="paren2">)</span><button class="done">Done</button>
            <button class="sets">Sets...</button>
            <svg class="simulia" viewBox="0 0 72 18"><path d="M7 3q6-2 5 1-1 2-4 3 4 0 2 4-2 3-7 4l4-7M17 7q-4-1-4 1.500l2 2.500q0 3-4 2.500" fill="none" stroke="#189a9d" stroke-width="1.200"/><text x="19" y="14" textLength="51" lengthAdjust="spacingAndGlyphs" font-family="Lato" font-style="italic" font-weight="bold" font-size="9" fill="#189a9d">SIMULIA</text></svg>
        </div>
    </div>
</div>

<div class="console">
    <div class="ctabs">
        <span class="on"><svg viewBox="0 0 14 14"><path d="M2 1h11v11H2z" fill="#e4e2cc" stroke="#777"/><path d="M0 13l5-5" stroke="#8a7524" stroke-width="2.500"/></svg></span>
        <span class="cli"><b>&gt;&gt;&gt;</b></span>
    </div>
    <pre>A new model database has been created.
The model "Model-1" has been created.
Warning: Grid center was moved to the sketch center.
Info: 5 entities copied from Sketch-1.</pre>
    <div class="cscroll"></div>
</div>

<div class="taskbar">
    <svg class="orb" viewBox="0 0 24 24"><circle cx="12" cy="12" r="11.500" fill="#235a84" stroke="#9fc3d5"/><path d="M1 9q11-14 22 0-11 4-22 0z" fill="#8eb9cf"/><path d="M5 7q3-2 6 0l-1 5q-3-1-6 0z" fill="#e9582a"/><path d="M12 7q3 1 6 0l-1 5q-3 1-6 0z" fill="#8cc83c"/><path d="M4 13q3-1 6 0l-1 5q-3-2-6 0z" fill="#4aa0e0"/><path d="M11 13q3 1 6 0l-1 5q-3 1-6 0z" fill="#f8cb33"/></svg>
    <svg class="clover" viewBox="0 0 24 24"><path d="M11 11H5Q0 1 8 2q5 2 3 9z" fill="#7ccb2b"/><path d="M12 11q-2-9 5-9 8 3 2 8-3 2-7 1z" fill="#47a2ea"/><path d="M12 12q9-2 10 4-1 8-7 5-3-3-3-9z" fill="#ea4030"/><path d="M11 12q2 9-5 9-6-2-4-7 3-3 9-2z" fill="#f9c929"/></svg>
    <b class="tgrip"></b>
    <div class="apps">
        <span><svg><use href="#pdisc"/></svg></span>
        <span><svg><use href="#egreen"/></svg></span>
        <span><svg viewBox="0 0 24 24"><path d="M12 4h11v16H12z" fill="#fff" stroke="#c8482b"/><path d="M1 4l14-3v22L1 20z" fill="#d04727"/><path d="M6 17V8h3q3 0 3 2.500T9 13H6" stroke="#fff" stroke-width="2" fill="none"/><path d="M16 9h5M16 12h5M16 15h5" stroke="#d04727"/></svg></span>
        <span><svg viewBox="0 0 24 24"><path d="M2 3h20v16H2z" fill="#3f8ed8" stroke="#bbdcf5" stroke-width="1.500"/><path d="M3 10q8-2 18-1v5H3z" fill="#d8eef5"/><path d="M3 13q8 4 18-1v6H3z" fill="#328271"/></svg></span>
        <span><b class="youdao">有道</b></span>
        <span><svg><use href="#hub"/></svg></span>
        <span class="active"><svg><use href="#hub"/></svg></span>
        <span><svg><use href="#recd"/></svg></span>
    </div>
    <div class="tray">
        <b class="tgrip"></b>
        <svg viewBox="0 0 12 12"><path d="M1 4h10v6H1z" fill="#d5dddd"/><path d="M2 6h8M2 8h8M6 4V2" stroke="#68797c"/></svg>
        <svg><use href="#pdisc"/></svg>
        <svg><use href="#recd"/></svg>
        <svg viewBox="0 0 12 12"><path d="M1 6l5-5 5 2-4 4 3 3-6 1z" fill="#25913a"/><path d="M6 6h5l-3 5z" fill="#3e6fca"/><circle cx="7" cy="4" r="2" fill="#e5e9e4"/></svg>
        <b class="nine">9)</b>
        <svg viewBox="0 0 12 12"><path d="M2 9q0-8 4-8t4 8l-2 2H4z" fill="#cde9fb" stroke="#5da9df"/></svg>
        <svg><use href="#egreen"/></svg>
        <svg viewBox="0 0 12 12"><circle cx="6" cy="6" r="5.500" fill="#efd522" stroke="#37a02f"/><path d="M6 3v6M3 6h6" stroke="#168b2b" stroke-width="2"/></svg>
        <svg viewBox="0 0 12 12"><path d="M2 0h3v6H2z" fill="#cdd7d8"/><circle cx="8" cy="8" r="3.500" fill="#37a743"/><path d="M6 8l2 2 2-4" stroke="#fff" fill="none"/></svg>
        <svg viewBox="0 0 12 12"><path d="M0 1h12v10H0z" fill="#263c1f"/><path d="M2 6q4-5 8 0-4 5-8 0zM5 6h3" stroke="#78b82e" fill="none"/></svg>
        <svg viewBox="0 0 12 12"><path d="M1 4h3l4-3v10L4 8H1z" fill="#c65b3e" stroke="#eee" stroke-width=".5"/><path d="M9 3q3 3 0 6" stroke="#ccc" fill="none"/></svg>
        <svg viewBox="0 0 12 12"><path d="M1 11L11 1v10z" fill="#a7bcc0" stroke="#e9f1f1" stroke-width=".6"/></svg>
        <svg viewBox="0 0 12 12"><path d="M1 4h2l3-3v10L3 8H1z" fill="#fff"/><path d="M8 3q3 3 0 6" stroke="#ddd" fill="none"/></svg>
        <div class="clock">8:40 周四<br>2021/5/6</div>
        <svg class="note" viewBox="0 0 16 16"><path d="M1 1h10v12H1z" fill="#fff"/><path d="M3 4h6M3 7h5" stroke="#555"/><path d="M8 7h7v8H8z" fill="#222"/><path d="M10.500 9.500l1-.5v4" fill="none" stroke="#fff"/></svg>
        <i class="desk"></i>
    </div>
</div>

<!-- Recorder bar -->
<div class="recorder">
    <svg class="burger" viewBox="0 0 9 9"><path d="M0 1h9M0 4.500h9M0 8h9" stroke="#bbb"/></svg>
    <svg class="pin" viewBox="0 0 8 9"><path d="M2 0h4v4h2v1H4.500v4h-1V5H0V4h2z" fill="#4d9fe0"/></svg>
    <span class="size">1920x1080</span>
    <span class="state">正在录制 [00:04:17]</span>
    <svg class="ctl" viewBox="0 0 90 12"><path d="M3 2v8M7 2v8" stroke="#dd2b2f" stroke-width="2"/><path d="M21 2h8v8h-8z" fill="#dd2b2f"/><path d="M41 4h2l1-2h4l1 2h2v6H41z" fill="#ddd"/><circle cx="46" cy="6.500" r="2" fill="#ddd" stroke="#26313a"/><path d="M55.500 2v8M76.500 2v8" stroke="#444e56"/><path d="M61 9l6-6" stroke="#e5e5e5" stroke-width="2.600"/><path d="M82 3l6 6M88 3l-6 6" stroke="#ccc"/></svg>
</div>

<!-- Caption -->
<svg class="caption" viewBox="0 0 410 50">
    <g class="lat"><text x="8" y="37" textLength="48" lengthAdjust="spacingAndGlyphs">CAE</text><text x="238" y="37" textLength="47" lengthAdjust="spacingAndGlyphs">CAE</text><text x="288" y="37" textLength="14" lengthAdjust="spacingAndGlyphs">_</text><text x="304" y="37" textLength="96" lengthAdjust="spacing">doctor</text></g>
    <g class="han"><text x="59" y="36.500">老司机</text><text x="172" y="36.500">微信</text></g>
</svg>

</body>
</html>
```
FILE: styles.css
```css
* {box-sizing: border-box;}
body {
    margin: 0;
    width: 1280px;
    height: 720px;
    overflow: hidden;
    display: flex;
    flex-direction: column;
    background: #f0f0f0;
    color: #222;
    font: 8.3px/12px "Noto Sans", "Noto Sans CJK SC", sans-serif;
}
svg {display: block;flex: none;}
i, em {font-style: normal;}
.defs {position: absolute;width: 0;height: 0;}

/* Title */
.titlebar {height: 15px;flex: none;display: flex;align-items: center;background: radial-gradient(ellipse 22px 14px at 462px 3px,rgba(205,180,130,.8),transparent),linear-gradient(90deg,#dbe9f5,#a9cdee 12%,#b9dbf8 30%,#a8d2f5 60%,#b6dbfa 80%,#bdddf8);border-bottom: 1px solid #71889c;}
.appicon {width: 11px;height: 11px;}
.title {margin-left: 3px;font-size: 8.35px;}
.winbtns {margin-left: auto;margin-right: 2px;display: flex;height: 12px;align-self: flex-start;border: 1px solid #6e7f8e;border-top: 0;border-radius: 0 0 3px 3px;overflow: hidden;}
.winbtns span {width: 18px;display: flex;align-items: center;justify-content: center;background: linear-gradient(#d8e5f0,#a9bccd);border-right: 1px solid #6e7f8e;}
.winbtns .min i {width: 7px;height: 3px;background: #fff;border: 1px solid #777;}
.winbtns .max i {width: 7px;height: 7px;background: #ddd;border: 1px solid #666;}
.winbtns .close {width: 32px;background: linear-gradient(#e4a595,#c3472b 50%,#cf684a);color: #fff;font-weight: bold;border: 0;}

/* Menu */
.menubar {height: 18px;flex: none;display: flex;align-items: center;padding-left: 3px;background: linear-gradient(#fff,#f1f1f1);border-bottom: 1px solid #bbb;}
.menubar span {margin-right: 10.6px;}
.menubar u {text-underline-offset: 1px;}
.docicon {width: 10px;height: 10px;margin-right: 7px;}
.helpptr {width: 10px;height: 10px;margin-left: -1px;}
.mdi {margin-left: auto;display: flex;gap: 4px;margin-right: 3px;}
.mdi i {width: 10px;height: 9px;border: 1px solid #9db2c0;background: #eaf2f8;color: #466078;font-size: 7px;line-height: 6px;text-align: center;font-weight: bold;}

/* Toolbars */
.tools {height: 37px;flex: none;background: #f0f0f0;}
.toolbar {display: flex;align-items: center;width: max-content;height: 18px;background: #f8f8f8;border-bottom: 1px solid #c9c9c9;border-right: 1px solid #bbb;}
.toolbar.t2 {height: 19px;}
.toolbar svg, .toolbar strong, .abox {width: 17.25px;height: 15px;flex: none;}
.t2 svg, .t2 .abox, .t2 .ax {width: 17.37px;}
.grip {width: 6px;height: 13px;flex: none;background: radial-gradient(circle,#888 .7px,transparent 1px) 0 0/6px 3px;}
.grip.wide {width: 10px;background-size: 10px 3px;}
.toolbar strong {color: #c01a1a;text-align: center;font: bold 11.5px/15px "Liberation Sans", sans-serif;}
.ax {position: relative;width: 17.25px;flex: none;}
.ax em {position: absolute;color: #c22;font: bold 5.5px/6px "Liberation Sans", sans-serif;}
.ax .tl {left: 6px;top: 0;}
.ax .br {left: 12px;top: 5px;}
.ax .tc {left: 8px;top: 0;}
.ax .bl {left: 0;top: 5px;}
.ax .mr {left: 12px;top: 6px;}
.ax .bm {left: 6px;top: 9px;}
.ax .gif {left: 8px;top: -1px;color: #111;font-size: 5px;}
.abox {border: 1px solid #444;background: #fff;color: #b3201d;font: bold 12px/13px "Liberation Serif", serif;text-align: center;}
.dim {color: #aaa;}
.hollow {color: #fff;}
.gold {color: #eec558;}
.drop {width: 9px;height: 5px;flex: none;background: #222;clip-path: polygon(20% 10%,80% 10%,50% 90%);}
.cwd {width: 94px;padding-left: 1px;white-space: nowrap;}
.combo {position: relative;display: flex;align-items: center;flex: none;height: 14px;background: #fff;border: 1px solid #aaa;padding-left: 2px;white-space: nowrap;}
.combo > i {margin-left: auto;align-self: stretch;width: 7px;background: linear-gradient(#eee,#c8c8c8);border: 1px solid #888;display: flex;align-items: center;justify-content: center;}
.combo > i::after {content: "";border: 2.5px solid transparent;border-top: 3px solid #111;border-bottom: 0;}
.w87 {width: 87px;}
.w92 {width: 92px;}
.w77 {width: 77px;margin-right: 1px;}
.w71 {width: 74px;}
.w64 {width: 65px;}
.spin {padding-left: 7px;height: 15px;}
.spin::before {content: "";position: absolute;left: 0;top: 0;width: 5px;height: 13px;background: linear-gradient(#777,#777) center 4px/3px 1px no-repeat,linear-gradient(#777,#777) center 9px/3px 1px no-repeat,#e4e4e4;border-right: 1px solid #bbb;}

/* Main area */
.main {height: 511px;flex: none;display: flex;}
.left {width: 228px;flex: none;padding-left: 2px;background: #f4f4f4;}
.tabs {height: 21px;display: flex;align-items: flex-end;padding-top: 5px;}
.tabs span {height: 14px;padding: 1px 4px 0;background: #ddd;border: 1px solid #999;border-bottom: 0;}
.tabs span.on {height: 16px;padding: 1px 5px 0;background: #fafafa;}
.tabs span + span {border-left: 0;}
.dbrow {height: 22px;display: flex;align-items: center;border-top: 1px solid #aaa;border-right: 1px solid #aaa;width: 222px;padding-left: 1px;background: #fafafa;}
.combo.db {width: 156px;padding-left: 1px;}
.combo.db svg {width: 12px;height: 12px;margin-right: 2px;}
.dbtools {width: 60px;height: 14px;margin-left: 4px;}
.treebox {width: 223px;height: 466px;display: flex;background: #fff;border: 1px solid #999;border-left: 1px solid #aaa;overflow: hidden;}
.tree {position: relative;flex: 1;height: 464px;overflow: hidden;}
.tree::before, .tree::after {content: "";position: absolute;width: 1px;background: repeating-linear-gradient(#bbb 0 2px,transparent 2px 3px);}
.tree::before {left: 4px;top: 10px;height: 400px;}
.tree::after {left: 28px;top: 24px;height: 360px;}
.row {position: relative;z-index: 1;height: 14px;display: flex;align-items: center;white-space: nowrap;}
.row svg {width: 12px;height: 12px;margin-right: 3px;}
.row::before {content: "";box-sizing: border-box;width: 7px;height: 7px;flex: none;margin-right: 2px;}
.row.open::before, .row.shut::before {border: 1px solid #b5b9c2;background: linear-gradient(#555,#555) center/3px 1px no-repeat,#fff;}
.row.shut::before {background: linear-gradient(#567,#567) center/3px 1px no-repeat,linear-gradient(#567,#567) center/1px 3px no-repeat,#fff;}
.l0 {padding-left: 1px;}
.l1 {padding-left: 13px;}
.l2 {padding-left: 25px;}
.cur {border-bottom: 1px solid #333;line-height: 11px;}
.scroll {width: 11px;display: flex;flex-direction: column;align-items: center;background: #f0f0f0;border-left: 1px solid #ddd;}
.up, .down {height: 13px;width: 5px;flex: none;background: #333;clip-path: polygon(0 60%,50% 40%,100% 60%);}
.down {height: 20px;clip-path: polygon(0 60%,100% 60%,50% 75%);}
.thumb {flex: 1;width: 9px;border: 1px solid #999;background: linear-gradient(90deg,#f2f2f2,#cfcfcf);display: flex;align-items: center;justify-content: center;}
.thumb b {width: 4px;height: 6px;background: repeating-linear-gradient(#444 0 1px,transparent 1px 2px);}

.right {flex: 1;display: flex;flex-direction: column;min-width: 0;}
.context {height: 22px;flex: none;display: flex;align-items: center;padding-left: 5px;background: linear-gradient(#fff,#f0f0f0);}
.context label {width: 36px;}
.context .m2 {width: 31px;margin-left: 9px;}
.context .m3 {width: 20px;margin-left: 9px;}
.work {flex: 1;display: flex;min-height: 0;}
.toolbox {width: 42px;flex: none;border-right: 1px solid #ccc;background: linear-gradient(90deg,#fdfdfd,#f0f0f0);}
.grp {display: grid;grid-template-columns: 19px 19px;justify-items: center;align-items: center;margin-left: 1px;padding-left: 1px;}
.grp svg {width: 15px;height: 15px;}
.grp + .grp {border-top: 1px solid #aaa;}
.g1 {grid-template-rows: 22px 22px 17px 20px 20px 22px 22px 21px;}
.g2 {grid-template-rows: 23px 18px;}
.g3 {grid-template-rows: 22px 18px;}
.g4 {grid-template-rows: 25px 16px;}
.g5 {grid-template-rows: 26px 12px;}

.viewport {position: relative;width: 1009px;background: linear-gradient(#1b2e44,#243a50 40%,#2c4359 60%,#43586e 70%,#6b7e93 83%,#9fb0c6);}
.part {position: absolute;left: 410px;top: 3px;width: 200px;height: 440px;}
.compass {position: absolute;left: 939px;top: 8px;width: 40px;height: 52px;}
.axes {position: absolute;left: 48px;top: 388px;width: 63px;height: 57px;}
.ring {position: absolute;left: 954px;top: 409px;width: 44px;height: 44px;}
.spot {position: absolute;left: 277px;top: 84px;width: 31px;height: 31px;border-radius: 50%;background: #5a6933;}
.mag {position: absolute;left: 292px;top: 69px;width: 20px;height: 20px;}
.mouse {position: absolute;left: 292px;top: 99px;width: 15px;height: 25px;}

.prompt {height: 23px;flex: none;display: flex;align-items: center;padding: 0 0 2px 4px;background: linear-gradient(#fff,#efefef);white-space: nowrap;}
.back, .cancel {width: 13px;height: 14px;border: 1px solid #bbb;border-radius: 2px;display: flex;align-items: center;justify-content: center;margin-right: 2px;}
.back svg {width: 9px;height: 9px;}
.cancel {border-color: #888;color: #cf1428;font: bold 9.5px/12px "Noto Sans", sans-serif;}
.ptext {width: 172px;margin-left: 2px;}
.paren {width: 9px;}
.check {width: 9px;height: 9px;border: 1px solid #999;background: #e4eaf3;}
.check svg {width: 7px;height: 7px;}
.cs {width: 46px;margin-left: 2px;}
.field {width: 52px;height: 16px;border: 1px solid #aaa;background: #fff;padding: 1px;}
.field mark {background: #3390f0;color: #fff;display: inline-block;}
.paren2 {width: 7px;margin-left: 4px;}
.done, .sets {font: inherit;color: #222;padding: 0;border: 1px solid #888;border-radius: 2px;background: linear-gradient(#f2f2f2,#d0d0d0);height: 15px;}
.done {width: 25px;border: 1.5px solid #3b9dc2;background: linear-gradient(#eaf5fa,#c3dbe6);}
.sets {width: 26px;margin-left: auto;margin-right: 16px;}
.simulia {width: 72px;height: 18px;margin-top: 2px;}

/* Messages */
.console {height: 112px;flex: none;display: flex;background: #f3f3f3;border-top: 1px solid #ddd;}
.ctabs {width: 26px;padding-left: 2px;background: #fff;}
.ctabs span {height: 26px;display: flex;align-items: center;justify-content: center;border: 1px solid #ccc;border-right: 0;}
.ctabs svg {width: 14px;height: 14px;}
.ctabs .cli {height: 23px;background: #ddd;}
.cli b {width: 16px;height: 16px;background: #f0e676;border: 1px solid #555;font: bold 7px/13px "Liberation Sans", sans-serif;text-align: center;}
.console pre {flex: 1;margin: 1px 0 2px;padding: 1px 2px;background: #fff;border: 1px solid #8a8a8a;border-width: 2px 1px 1px 2px;font: 8.87px/8.8px "Liberation Mono", monospace;color: #444;}
.cscroll {width: 12px;background: #f0f0f0;}

/* Taskbar */
.taskbar {
    height: 27px;
    flex: none;
    display: flex;
    align-items: center;
    background: linear-gradient(rgba(230,245,245,.5),rgba(255,255,255,0) 4px),
        radial-gradient(ellipse 70px 18px at 500px 20px,rgba(120,195,205,.4),transparent),
        radial-gradient(ellipse 60px 16px at 630px 6px,rgba(130,200,210,.35),transparent),
        radial-gradient(ellipse 80px 16px at 770px 18px,rgba(110,180,195,.4),transparent),
        radial-gradient(ellipse 50px 14px at 890px 8px,rgba(30,80,95,.4),transparent),
        linear-gradient(90deg,#2d6f79,#3d7b85 30%,#3b8190 40%,#418998 50%,#3c7d8d 68%,#3c6f7c 76%,#5d7c88);
    border-top: 1px solid #8b9a9e;
}
.orb {width: 25px;height: 25px;margin-left: 5px;}
.clover {width: 20px;height: 20px;margin-left: 16px;}
.tgrip {width: 6px;height: 20px;flex: none;background: radial-gradient(circle,#183f48 .6px,transparent 1px) 0 0/2px 3px;}
.clover + .tgrip {margin-left: 12px;}
.apps {display: flex;gap: 2.3px;margin-left: 7px;}
.apps span {width: 39px;height: 25px;display: flex;align-items: center;justify-content: center;border: 1px solid #bcd3d6;border-radius: 2px;background: linear-gradient(135deg,rgba(255,255,255,.5),rgba(255,255,255,.12));}
.apps .active {background: linear-gradient(135deg,#d5e2e3,#86aab0);}
.apps svg {width: 21px;height: 21px;}
.youdao {width: 21px;height: 21px;border-radius: 4px;background: #e50b1c;color: #fff;font: bold 8.5px/21px "Noto Sans CJK SC", sans-serif;text-align: center;}
.tray {margin-left: auto;display: flex;align-items: center;}
.tray svg {width: 12px;height: 12px;margin-right: 4.1px;}
.tray .tgrip {margin-right: 5px;}
.nine {width: 12px;height: 12px;margin-right: 4.1px;border-radius: 2px;background: #dc2529;color: #fff;text-align: center;font: bold 8px/11px "Liberation Sans", sans-serif;}
.clock {width: 50px;margin-left: 4px;text-align: center;color: #fff;font: 8.3px/11.5px "Noto Sans", "Noto Sans CJK SC", sans-serif;}
.tray svg.note {width: 16px;height: 16px;margin: 0 3px 0 6px;}
.desk {width: 10px;height: 26px;border: 1px solid #8fa5ab;background: rgba(255,255,255,.15);}

/* Overlays */
.recorder {position: absolute;left: 474px;top: 0;width: 333px;height: 16px;display: flex;align-items: center;background: #20292f;clip-path: polygon(0 0,100% 0,95% 100%,5% 100%);color: #eee;font-size: 8.15px;}
.burger {width: 8px;height: 8px;margin-left: 22px;}
.pin {width: 6px;height: 8px;margin-left: 10px;}
.size {margin-left: 8px;width: 77px;}
.state {width: 87px;white-space: nowrap;}
.ctl {width: 90px;height: 12px;margin-left: 4px;}
.caption {position: absolute;left: 431px;top: 660px;width: 410px;height: 50px;fill: #1879e6;stroke: #08101c;stroke-width: 2.5px;paint-order: stroke;filter: drop-shadow(2px 2px 1px rgba(70,30,20,.6));}
.lat {font: bold 34px "Liberation Serif", serif;}
.han {font: bold 32px "Noto Sans CJK SC", sans-serif;}
```
